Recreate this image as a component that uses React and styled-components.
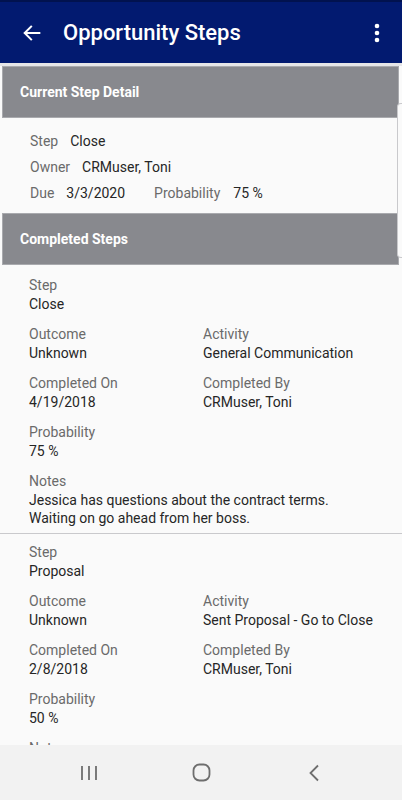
import React from 'react';
import styled, { createGlobalStyle } from 'styled-components';

const GlobalStyle = createGlobalStyle`
  body {
    margin: 0;
    font-family: Roboto, "Liberation Sans", sans-serif;
    background: #fafafa;
  }
`;

const Screen = styled.div`
  width: 402px;
  height: 800px;
  display: flex;
  flex-direction: column;
  overflow: hidden;
  position: relative;
  background: #fafafa;
`;

const AppBar = styled.header`
  height: 63px;
  flex-shrink: 0;
  display: flex;
  align-items: center;
  background: #021a70;
  border-top: 2px solid #01124f;
  box-sizing: border-box;
  color: #fff;
`;

const IconButton = styled.button`
  border: 0;
  background: none;
  padding: 0;
  width: ${(p) => p.w || 40}px;
  height: 40px;
  display: flex;
  align-items: center;
  justify-content: center;
  color: #fff;
  margin-left: ${(p) => p.ml || 0}px;
  margin-right: ${(p) => p.mr || 0}px;
`;

const Title = styled.h1`
  flex: 1;
  margin: 0 0 0 11px;
  font-size: 22px;
  font-weight: 500;
  letter-spacing: 0;
`;

const Content = styled.main`
  flex: 1;
  overflow: hidden;
  background: #fafafa;
  border-top: 3px solid #e6e6e8;
`;

const SectionHeader = styled.div`
  height: 52px;
  margin: 0 3px 0 2px;
  background: #88898e;
  border: 1px solid #a9aaae;
  box-sizing: border-box;
  display: flex;
  align-items: center;
  padding-left: 17px;
  color: #fff;
  font-size: 14px;
  font-weight: 700;
`;

const Summary = styled.div`
  padding: 15px 30px 11px;
  display: flex;
  flex-direction: column;
  gap: 9px;
  font-size: 14px;
`;

const SummaryRow = styled.div`
  display: flex;
  align-items: baseline;
  height: 17px;
`;

const Label = styled.span`
  color: #6a6a6a;
  margin-right: ${(p) => p.gap || 10}px;
`;

const Value = styled.span`
  color: #262626;
  margin-right: ${(p) => p.after || 0}px;
`;

const StepCard = styled.section`
  padding: 9px 16px 6px 29px;
  border-bottom: 1px solid #c9c9cc;
  display: grid;
  grid-template-columns: 174px 1fr;
  row-gap: 11px;
  font-size: 14px;

  &:first-of-type {
    padding-top: 11px;
  }
`;

const Field = styled.div`
  grid-column: ${(p) => (p.wide ? '1 / span 2' : 'auto')};
  line-height: 19px;
`;

const FieldLabel = styled.div`
  color: #6a6a6a;
`;

const FieldValue = styled.div`
  color: #262626;
`;

const NoteText = styled.div`
  color: #262626;
  white-space: pre-line;
  line-height: 18px;
`;

const NavBar = styled.nav`
  height: 55px;
  flex-shrink: 0;
  background: #f2f2f2;
  display: flex;
  align-items: center;
  justify-content: space-between;
  padding: 0 72px 0 73px;
`;

const NavIcon = styled.div`
  width: 32px;
  height: 32px;
  display: flex;
  align-items: center;
  justify-content: center;
`;

const ScrollThumb = styled.div`
  position: absolute;
  right: 0;
  top: 103px;
  width: 4px;
  height: 153px;
  border: 1px solid #c9c9cc;
  border-right: 0;
  border-radius: 4px 0 0 4px;
  background: #fafafa;
`;

const steps = [
  {
    step: 'Close',
    outcome: 'Unknown',
    activity: 'General Communication',
    completedOn: '4/19/2018',
    completedBy: 'CRMuser, Toni',
    probability: '75 %',
    notes: 'Jessica has questions about the contract terms.\nWaiting on go ahead from her boss.',
  },
  {
    step: 'Proposal',
    outcome: 'Unknown',
    activity: 'Sent Proposal - Go to Close',
    completedOn: '2/8/2018',
    completedBy: 'CRMuser, Toni',
    probability: '50 %',
    notes: 'Sent proposal to Jessica.',
  },
];

const App = () => (
  <>
    <GlobalStyle />
    <Screen>
      <AppBar>
        <IconButton ml={12}>
          <svg width="22" height="22" viewBox="0 0 24 24" fill="none" stroke="#fff" strokeWidth="2.2" strokeLinecap="square">
            <path d="M20 12H5" />
            <path d="M11 5l-7 7 7 7" />
          </svg>
        </IconButton>
        <Title>Opportunity Steps</Title>
        <IconButton w={24} mr={13}>
          <svg width="6" height="20" viewBox="0 0 6 20" fill="#fff">
            <circle cx="3" cy="3" r="2.3" />
            <circle cx="3" cy="10" r="2.3" />
            <circle cx="3" cy="17" r="2.3" />
          </svg>
        </IconButton>
      </AppBar>
      <Content>
        <SectionHeader>Current Step Detail</SectionHeader>
        <Summary>
          <SummaryRow>
            <Label gap={12}>Step</Label>
            <Value>Close</Value>
          </SummaryRow>
          <SummaryRow>
            <Label gap={12}>Owner</Label>
            <Value>CRMuser, Toni</Value>
          </SummaryRow>
          <SummaryRow>
            <Label gap={12}>Due</Label>
            <Value after={29}>3/3/2020</Value>
            <Label gap={13}>Probability</Label>
            <Value>75 %</Value>
          </SummaryRow>
        </Summary>
        <SectionHeader>Completed Steps</SectionHeader>
        {steps.map((s) => (
          <StepCard key={s.step}>
            <Field wide>
              <FieldLabel>Step</FieldLabel>
              <FieldValue>{s.step}</FieldValue>
            </Field>
            <Field>
              <FieldLabel>Outcome</FieldLabel>
              <FieldValue>{s.outcome}</FieldValue>
            </Field>
            <Field>
              <FieldLabel>Activity</FieldLabel>
              <FieldValue>{s.activity}</FieldValue>
            </Field>
            <Field>
              <FieldLabel>Completed On</FieldLabel>
              <FieldValue>{s.completedOn}</FieldValue>
            </Field>
            <Field>
              <FieldLabel>Completed By</FieldLabel>
              <FieldValue>{s.completedBy}</FieldValue>
            </Field>
            <Field wide>
              <FieldLabel>Probability</FieldLabel>
              <FieldValue>{s.probability}</FieldValue>
            </Field>
            <Field wide>
              <FieldLabel>Notes</FieldLabel>
              <NoteText>{s.notes}</NoteText>
            </Field>
          </StepCard>
        ))}
      </Content>
      <ScrollThumb />
      <NavBar>
        <NavIcon>
          <svg width="18" height="16" viewBox="0 0 18 16" stroke="#6e6e6e" strokeWidth="1.8">
            <path d="M2 1v14M9 1v14M16 1v14" />
          </svg>
        </NavIcon>
        <NavIcon>
          <svg width="19" height="19" viewBox="0 0 19 19" fill="none" stroke="#6e6e6e" strokeWidth="1.8">
            <rect x="1.5" y="1.5" width="16" height="16" rx="6" />
          </svg>
        </NavIcon>
        <NavIcon>
          <svg width="12" height="18" viewBox="0 0 12 18" fill="none" stroke="#6e6e6e" strokeWidth="1.8">
            <path d="M10 1.5L2.5 9l7.5 7.5" />
          </svg>
        </NavIcon>
      </NavBar>
    </Screen>
  </>
);

export default App;
